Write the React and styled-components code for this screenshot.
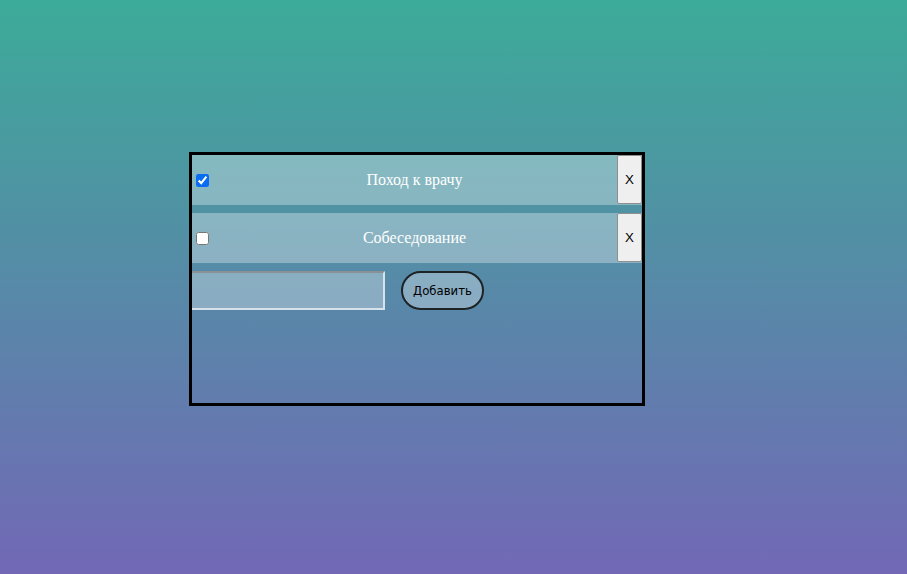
import React, { useState } from "react";
import styled, { createGlobalStyle } from "styled-components";

const Global = createGlobalStyle`
  html, body { margin: 0; padding: 0; height: 100%; }
  body {
    background: linear-gradient(to bottom, #3cab99 0%, #7268b6 100%);
    background-attachment: fixed;
    min-height: 574px;
    font-family: "Liberation Serif", serif;
  }
`;

const Page = styled.div`
  padding: 152px 0 0 189px;
`;

const Board = styled.div`
  width: 450px;
  height: 248px;
  border: 3px solid #000;
  display: flex;
  flex-direction: column;
  gap: 8px;
`;

const Row = styled.div`
  display: flex;
  align-items: center;
  height: 50px;
  background: rgba(255, 255, 255, 0.32);
`;

const Check = styled.input`
  width: 13px;
  height: 13px;
  margin: 0 3px 0 4px;
  accent-color: #0a6cf0;
`;

const Title = styled.span`
  flex: 1;
  text-align: center;
  color: #fff;
  font-family: "Liberation Serif", serif;
  font-size: 16px;
`;

const RemoveButton = styled.button`
  width: 25px;
  height: 49px;
  align-self: flex-start;
  padding: 0;
  background: #efefef;
  border: 1px solid #8f8f8f;
  border-radius: 2px;
  font-family: "Liberation Sans", Arial, sans-serif;
  font-size: 13.33px;
  color: #000;
`;

const AddRow = styled.div`
  display: flex;
  align-items: center;
  gap: 16px;
`;

const TextInput = styled.input`
  box-sizing: border-box;
  width: 193px;
  height: 39px;
  background: rgba(255, 255, 255, 0.3);
  border: 2px inset #d8e2ea;
  border-left: none;
  outline: none;
`;

const AddButton = styled.button`
  box-sizing: border-box;
  width: 83px;
  height: 39px;
  border: 2px solid #1e2326;
  border-radius: 20px;
  background: rgba(255, 255, 255, 0.3);
  font-family: "DejaVu Sans", Verdana, sans-serif;
  font-size: 11.7px;
  color: #000;
  padding: 0;
`;

export default function App() {
  const [items, setItems] = useState([
    { id: 1, title: "Поход к врачу", done: true },
    { id: 2, title: "Собеседование", done: false },
  ]);
  return (
    <Page>
      <Global />
      <Board>
        {items.map((it) => (
          <Row key={it.id}>
            <Check
              type="checkbox"
              checked={it.done}
              onChange={() =>
                setItems(items.map((x) => (x.id === it.id ? { ...x, done: !x.done } : x)))
              }
            />
            <Title>{it.title}</Title>
            <RemoveButton>X</RemoveButton>
          </Row>
        ))}
        <AddRow>
          <TextInput type="text" />
          <AddButton>Добавить</AddButton>
        </AddRow>
      </Board>
    </Page>
  );
}
